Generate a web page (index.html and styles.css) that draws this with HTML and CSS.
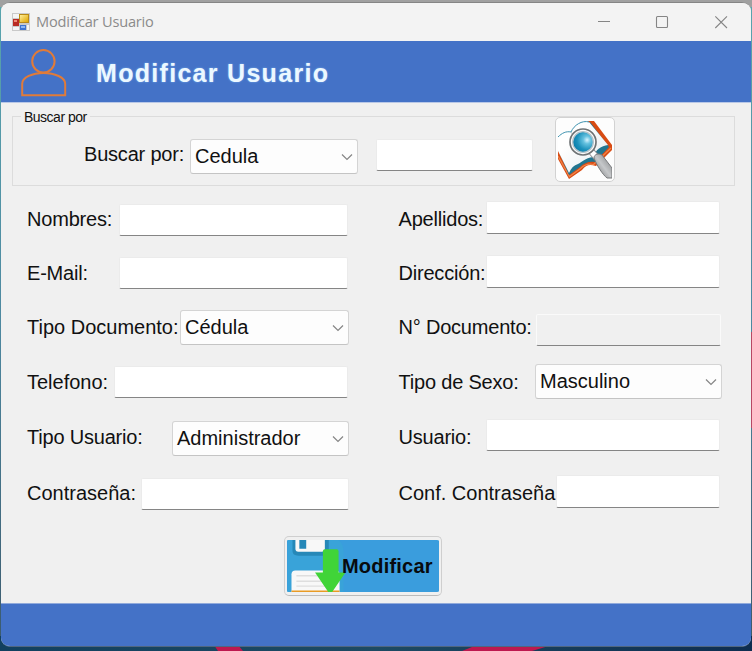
FILE: index.html
```html
<!DOCTYPE html>
<html lang="es">
<head>
<meta charset="utf-8">
<title>Modificar Usuario</title>
<link rel="stylesheet" href="styles.css">
</head>
<body>
<div class="desktop">
<svg class="wallpaper" viewBox="0 0 752 651" preserveAspectRatio="none">
<defs>
<linearGradient id="side" x1="0" y1="0" x2="0" y2="1"><stop offset="0" stop-color="#59a5ae"/><stop offset=".5" stop-color="#4d88a0"/><stop offset="1" stop-color="#3b596c"/></linearGradient>
<linearGradient id="floor"><stop offset="0" stop-color="#12405f"/><stop offset=".5" stop-color="#1d4a63"/><stop offset="1" stop-color="#0e2d50"/></linearGradient>
</defs>
<path fill="url(#side)" d="M0 0h752v651H0z"/>
<path fill="#a0a0a0" d="M0 0h752v7H0z"/>
<path fill="url(#floor)" d="M0 636h752v15H0z"/>
<path fill="#b84764" d="M751 332h1v96h-1z"/>
<path fill="#bd184f" d="M214 645h24l5 6h-25zM477 645h75l-20 6h-70z"/>
</svg>
<main class="window">
<header class="titlebar">
<svg class="app-icon" viewBox="0 0 18 18">
<defs><linearGradient id="gold" x2="1" y2="1"><stop offset="0" stop-color="#ffef9b"/><stop offset="1" stop-color="#dfa500"/></linearGradient></defs>
<path fill="#c9c9c9" d="M0 0h18v18H0z"/><path fill="#f5f5f5" d="M1 1h6v4H1zM1 14h6v3H1zM15 12h2v5h-2z"/>
<path fill="#b92b24" d="M1 6h6v7H1z"/><path fill="#ef8a78" d="M2 7h3v2H2z"/>
<path fill="#b98a16" d="M7 1h10v9H7z"/><path fill="url(#gold)" d="M8 2h8v7H8z"/>
<path fill="#3d73d0" d="M8 12h6v5H8z"/><path fill="#8bb6f6" d="M9 13h4v2H9z"/>
</svg>
<span class="caption">Modificar Usuario</span>
<svg class="window-buttons" viewBox="0 0 132 14">
<path d="M0 6.5h12"/><rect x="58.5" y="1.5" width="11" height="11" rx="1"/><path d="M117.3 1.3 129 13M129 1.3 117.3 13"/>
</svg>
</header>
<section class="banner">
<svg class="user-icon" viewBox="0 0 46 48"><circle cx="22.4" cy="12.3" r="11.2"/><path d="M1.2 46.2V34.7C1.2 28.5 11.5 23.9 22.6 23.9S44.2 28.5 44.2 34.7v11.5z"/></svg>
<h1>Modificar Usuario</h1>
</section>
<section class="search">
<span class="legend">Buscar por</span>
<label class="search-label">Buscar por:</label>
<div class="select search-select"><span>Cedula</span><svg class="chevron" viewBox="0 0 12 8"><path d="m1 1.5 5 5 5-5"/></svg></div>
<div class="input search-input"></div>
<button class="search-button" aria-label="Buscar">
<svg viewBox="0 0 54 59">
<defs>
<radialGradient id="lens" cx=".7" cy=".4" r=".75"><stop offset="0" stop-color="#d8f5ff"/><stop offset=".25" stop-color="#65c1df"/><stop offset=".65" stop-color="#1c91bb"/><stop offset="1" stop-color="#087aa7"/></radialGradient>
<linearGradient id="grip" x1="0" y1="1" x2="1" y2="0"><stop offset="0" stop-color="#68696b"/><stop offset=".5" stop-color="#c6c8ca"/><stop offset="1" stop-color="#77797b"/></linearGradient>
<linearGradient id="page" x2="1" y2="1"><stop offset=".3" stop-color="#fff"/><stop offset="1" stop-color="#e3e9ec"/></linearGradient>
</defs>
<path fill="#d84b13" d="M30 1h6l18 24v5L38 46c-7-2-10-1-14 4l-13 9L0 39V31z"/>
<path fill="none" stroke="#f0844a" stroke-width="1.2" d="m0 36 11.500 20.500 11-8c4-4 8-5 13-4L53 28"/>
<path fill="#21758f" d="M0 30 11 55l11-8c4-4 9-6 15-5l14-15L32 2z"/>
<path fill="url(#page)" d="M0 17c4-4 8-6 13-5C16 5 24 0 31 2l19 23c-7 1-12 4-15 12-8 1-11 5-15 7-4 1-7 4-9 9L0 31z"/>
<path fill="none" stroke="#3c91ae" d="M0 17c4-4 8-6 13-5C16 5 24 0 31 2"/>
<path fill="none" stroke="#b8c8ce" d="M13 12c4 8 14 14 22 25"/>
<path fill="none" stroke="#888b8e" stroke-width="7" d="m33 31 6 7"/>
<path fill="none" stroke="#fff" stroke-width="5" d="m32 30 7 8"/>
<path fill="url(#grip)" stroke="#77797b" d="M36 38c0-4 5-5 8-3l10 13v10h-5c-4-3-10-12-13-20z"/>
<circle cx="25" cy="22" r="13" fill="#fafafa" stroke="#6f7375" stroke-width="1.7"/>
<circle cx="25" cy="22" r="10.300" fill="url(#lens)" stroke="#b4c3ca" stroke-width="1.3"/>
</svg>
</button>
</section>
<form class="fields">
<div class="column">
<div class="field"><label>Nombres:</label><div class="input nombres"></div></div>
<div class="field"><label>E-Mail:</label><div class="input email"></div></div>
<div class="field"><label class="wide">Tipo Documento:</label><div class="select tipo-documento"><span>Cédula</span><svg class="chevron" viewBox="0 0 12 8"><path d="m1 1.5 5 5 5-5"/></svg></div></div>
<div class="field"><label class="wide">Telefono:</label><div class="input telefono"></div></div>
<div class="field"><label>Tipo Usuario:</label><div class="select tipo-usuario"><span>Administrador</span><svg class="chevron" viewBox="0 0 12 8"><path d="m1 1.5 5 5 5-5"/></svg></div></div>
<div class="field"><label class="wide">Contraseña:</label><div class="input contrasena"></div></div>
</div>
<div class="column">
<div class="field"><label>Apellidos:</label><div class="input apellidos"></div></div>
<div class="field"><label>Dirección:</label><div class="input direccion"></div></div>
<div class="field"><label>N° Documento:</label><div class="input disabled documento"></div></div>
<div class="field"><label>Tipo de Sexo:</label><div class="select sexo"><span>Masculino</span><svg class="chevron" viewBox="0 0 12 8"><path d="m1 1.5 5 5 5-5"/></svg></div></div>
<div class="field"><label>Usuario:</label><div class="input usuario"></div></div>
<div class="field"><label class="wide">Conf. Contraseña</label><div class="input confirmar"></div></div>
</div>
</form>
<div class="actions">
<button class="save">
<svg class="disk" viewBox="0 0 60 53">
<path fill="#39a3d9" d="M0 0h52q5 4 5 12v41H0z"/>
<path fill="#2688b8" d="M5 0h37v12q0 4-4 4H11q-6 0-6-5z"/>
<path fill="#f8f8f8" d="M8 0h30v9q0 3-3 3H11q-3 0-3-3z"/><path fill="#2688b8" d="M12 0h7v9h-7z"/>
<path fill="#f8f8f8" d="M4 53V35q0-4 4-4h41q4 0 4 4v18z"/><path stroke="#dedede" stroke-width="1.5" d="M9 36.500h40M9 42h40M9 47h40"/>
<path fill="#e99b25" d="M4 51.500h49V53H4z"/>
<path fill="#40d438" d="M38 9.500h12q2 0 2 2V33h7L45.500 53h-4L28 33h8V11.500q0-2 2-2z"/>
</svg>
<span>Modificar</span>
</button>
</div>
<footer class="bottom-bar"></footer>
</main>
</div>
</body>
</html>
```
FILE: styles.css
```css
* { box-sizing: border-box; }
body { margin: 0; overflow: hidden; font-family: "Liberation Sans", Arial, sans-serif; color: #111; }
.desktop { width: 752px; height: 651px; padding: 2px 1px 4px; position: relative; }
.wallpaper { position: absolute; left: 0; top: 0; width: 752px; height: 651px; }
.window { position: relative; width: 750px; height: 645px; display: flex; flex-direction: column; overflow: hidden; background: #f0f0f0; border-top: 1px solid #858585; border-bottom: 1px solid #4f6680; border-radius: 9px; }
.titlebar { height: 38px; flex: none; display: flex; align-items: center; padding: 0 21px 0 11px; background: #f3f3f3; }
.app-icon { width: 18px; height: 18px; margin-right: 6px; }
.caption { flex: 1; margin-top: -2px; font: 14.6px "Open Sans", "Noto Sans", sans-serif; letter-spacing: -.2px; color: #8b8b8b; }
.window-buttons { width: 132px; height: 14px; fill: none; stroke: #858585; stroke-width: 1.1; }
.banner { height: 62px; flex: none; display: flex; background: #4472c7; border-bottom: 1px solid #b9c8e7; padding: 8px 20px; }
.user-icon { width: 46px; height: 48px; fill: none; stroke: #e07b39; stroke-width: 2; }
h1 { margin: 9px 0 0 29px; font-size: 25px; line-height: 30px; letter-spacing: 1.3px; color: #ecf8ff; text-shadow: 0 0 2px #7fb4ee; }
.search { position: relative; height: 70px; flex: none; margin: 13px 16px 0 11px; border: 1px solid #dcdcdc; display: flex; align-items: flex-start; padding-left: 71px; }
.legend { position: absolute; left: 8px; top: -8px; padding: 0 3px; background: #f0f0f0; font-size: 14px; line-height: 16px; letter-spacing: -.5px; }
label { flex: none; font-size: 20px; line-height: 24px; white-space: nowrap; letter-spacing: -.2px; }
.wide { letter-spacing: 0; }
.search-label { width: 106px; margin-top: 25px; }
.input { height: 32px; background: #fff; border: 1px solid #ebebeb; border-bottom: 1px solid #858585; border-radius: 2px; flex: none; }
.disabled { background: #f0f0f0; border-color: #fafafa; border-bottom-color: #858585; }
.select { height: 35px; flex: none; display: flex; align-items: center; justify-content: space-between; padding: 0 4px; background: #fdfdfd; border: 1px solid #d4d4d4; border-bottom-color: #c4c4c4; border-radius: 3px; font-size: 20px; line-height: 24px; }
.select span { margin-top: -1px; }
.chevron { width: 12px; height: 8px; fill: none; stroke: #858585; stroke-width: 1.2; }
.search-select { width: 168px; margin-top: 22px; }
.search-input { width: 157px; margin: 22px 22px 0 18px; }
.search-button { width: 60px; height: 65px; padding: 2px; margin-top: 0; border: 1px solid #d2d2d2; border-radius: 5px; background: #fdfdfd; display: flex; align-items: center; justify-content: center; }
.search-button svg { width: 54px; height: 59px; flex: none; }
.fields { display: grid; grid-template-columns: 371.5px 1fr; padding: 14px 0 0 26px; height: 336px; flex: none; }
.column { display: grid; grid-template-rows: 54px 54px 55px 55px 56px 48px; }
.field { display: flex; align-items: flex-start; width: 322px; justify-content: space-between; }
.field label { padding-top: 7px; width: 0; }
.nombres { width: 229px; margin: 4px 1px 0 0; }
.email { width: 229px; margin: 3px 1px 0 0; }
.tipo-documento { width: 169px; margin-top: 2px; }
.telefono { width: 234px; margin: 3px 1px 0 0; }
.tipo-usuario { width: 177px; margin-top: 3px; }
.contrasena { width: 208px; margin-top: 4px; }
.column + .column .field { width: 323.5px; }
.apellidos { width: 234px; margin: 1px 2px 0 0; height: 33px; }
.direccion { width: 234px; margin: 1px 2px 0 0; height: 33px; }
.documento { width: 185px; margin: 6px 1px 0 0; }
.sexo { width: 187px; margin-top: 1px; }
.usuario { width: 234px; margin: 1px 2px 0 0; }
.confirmar { width: 164px; margin: 1px 2px 0 0; height: 33px; }
.actions { height: 81px; flex: none; padding: 14px 0 0 283px; }
.save { width: 158px; height: 60px; padding: 3px 2px; border: 1px solid #cfcfcf; border-bottom-color: #bbb; border-radius: 5px; background: linear-gradient(#3a9ddd, #3a9ddd) content-box #fff; display: flex; align-items: center; font: bold 20px "Liberation Sans", Arial, sans-serif; letter-spacing: .2px; color: #080b0e; overflow: hidden; }
.disk { width: 60px; height: 52px; flex: none; }
.save span { margin-left: -5px; }
.bottom-bar { flex: 1; background: #4472c7; border-top: 1px solid #91aadb; }
```
